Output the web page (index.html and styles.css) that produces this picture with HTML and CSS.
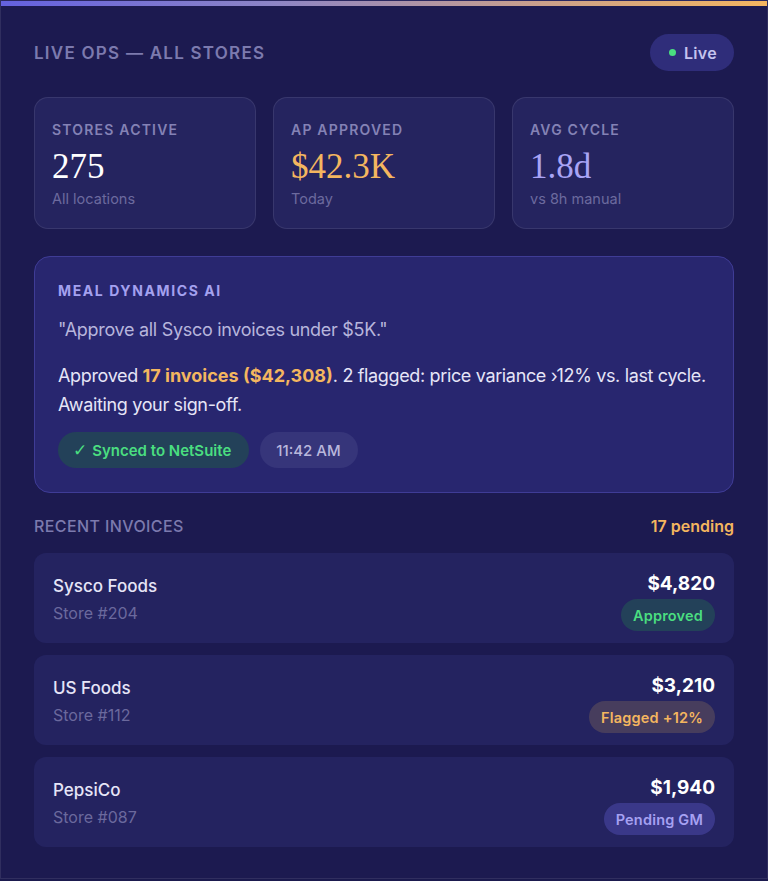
FILE: index.html
```html
<!DOCTYPE html>
<html lang="en">
<head>
<meta charset="utf-8">
<title>Live Ops — All Stores</title>
<link rel="stylesheet" href="styles.css">
</head>
<body>
<main class="panel">
  <div class="accent-bar"></div>
  <div class="panel-body">
    <header class="panel-head">
      <h1 class="panel-title">LIVE OPS — ALL STORES</h1>
      <span class="live-pill"><span class="live-dot"></span>Live</span>
    </header>

    <section class="stats">
      <div class="stat">
        <div class="stat-label">STORES ACTIVE</div>
        <div class="stat-value">275</div>
        <div class="stat-sub">All locations</div>
      </div>
      <div class="stat">
        <div class="stat-label">AP APPROVED</div>
        <div class="stat-value stat-value--amber">$42.3K</div>
        <div class="stat-sub">Today</div>
      </div>
      <div class="stat">
        <div class="stat-label">AVG CYCLE</div>
        <div class="stat-value stat-value--violet">1.8d</div>
        <div class="stat-sub">vs 8h manual</div>
      </div>
    </section>

    <section class="ai-card">
      <div class="ai-label">MEAL DYNAMICS AI</div>
      <p class="ai-quote">"Approve all Sysco invoices under $5K."</p>
      <p class="ai-reply">Approved <strong class="hl">17 invoices ($42,308)</strong>. 2 flagged: price variance ›12% vs. last cycle. Awaiting your sign-off.</p>
      <div class="ai-tags">
        <span class="tag tag--ok"><span class="tick">✓</span>Synced to NetSuite</span>
        <span class="tag tag--time">11:42 AM</span>
      </div>
    </section>

    <div class="list-head">
      <span class="list-title">RECENT INVOICES</span>
      <span class="list-count">17 pending</span>
    </div>

    <ul class="invoices">
      <li class="invoice">
        <div class="inv-left">
          <div class="inv-name">Sysco Foods</div>
          <div class="inv-store">Store #204</div>
        </div>
        <div class="inv-right">
          <div class="inv-amount">$4,820</div>
          <span class="badge badge--ok">Approved</span>
        </div>
      </li>
      <li class="invoice">
        <div class="inv-left">
          <div class="inv-name">US Foods</div>
          <div class="inv-store">Store #112</div>
        </div>
        <div class="inv-right">
          <div class="inv-amount">$3,210</div>
          <span class="badge badge--warn">Flagged +12%</span>
        </div>
      </li>
      <li class="invoice">
        <div class="inv-left">
          <div class="inv-name">PepsiCo</div>
          <div class="inv-store">Store #087</div>
        </div>
        <div class="inv-right">
          <div class="inv-amount">$1,940</div>
          <span class="badge badge--pending">Pending GM</span>
        </div>
      </li>
    </ul>
  </div>
</main>
</body>
</html>
```

FILE: styles.css
```css
* { box-sizing: border-box; }

html, body {
  margin: 0;
  padding: 0;
  background: #1b1a4e;
}

body {
  font-family: Inter, "Noto Sans", "Liberation Sans", sans-serif;
  color: #e4e3f5;
}

.panel {
  width: 768px;
  height: 879px;
  background: #1c1a50;
  border: 1px solid rgba(255, 255, 255, 0.09);
  border-top: 0;
  overflow: hidden;
}

.accent-bar {
  height: 6px;
  border-top: 1px solid #2a2860;
  background: linear-gradient(90deg, #6461e0 0%, #8c84c6 35%, #c9a08c 70%, #f4b660 100%);
}

.panel-body {
  padding: 28px 33px 0;
}

/* header */
.panel-head {
  display: flex;
  align-items: center;
  justify-content: space-between;
  height: 37px;
}

.panel-title {
  margin: 0;
  font-size: 17px;
  font-weight: 600;
  letter-spacing: 1.25px;
  color: #7c7aae;
}

.live-pill {
  display: inline-flex;
  align-items: center;
  gap: 8px;
  height: 37px;
  padding: 0 17px 0 19px;
  border-radius: 999px;
  background: #2f2d7a;
  color: #c5c3ee;
  font-size: 16px;
  font-weight: 600;
  letter-spacing: 0.3px;
}

.live-dot {
  width: 7px;
  height: 7px;
  border-radius: 50%;
  background: #4ade80;
}

/* stat cards */
.stats {
  display: grid;
  grid-template-columns: repeat(3, 1fr);
  gap: 17px;
  margin-top: 26px;
}

.stat {
  height: 132px;
  padding: 23px 17px 0;
  border-radius: 14px;
  background: #25245f;
  border: 1px solid rgba(255, 255, 255, 0.09);
}

.stat-label {
  font-size: 14px;
  font-weight: 600;
  letter-spacing: 1.2px;
  line-height: 18px;
  color: #8482b5;
}

.stat-value {
  margin-top: 8px;
  font-family: "Liberation Serif", "DejaVu Serif", serif;
  font-size: 35px;
  line-height: 40px;
  color: #ffffff;
}

.stat-value--amber { color: #f4b65f; }
.stat-value--violet { color: #a9a4f5; }

.stat-sub {
  margin-top: 2px;
  font-size: 14.5px;
  line-height: 20px;
  color: #6c6a9e;
}

/* assistant card */
.ai-card {
  margin-top: 27px;
  padding: 25px 23px 24px;
  border-radius: 16px;
  background: #28266f;
  border: 1px solid #3f3c96;
}

.ai-label {
  font-size: 14px;
  font-weight: 700;
  letter-spacing: 1.6px;
  line-height: 18px;
  color: #a4a1ef;
}

.ai-quote {
  margin: 16px 0 0;
  font-size: 18px;
  line-height: 28px;
  letter-spacing: -0.3px;
  color: #b7b5dc;
}

.ai-reply {
  margin: 17px 0 0;
  font-size: 18px;
  line-height: 29px;
  letter-spacing: -0.35px;
  color: #e6e5f7;
}

.hl {
  font-weight: 700;
  letter-spacing: 0;
  color: #f4b65f;
}

.ai-tags {
  display: flex;
  gap: 11px;
  margin-top: 13px;
}

.tag {
  display: inline-flex;
  align-items: center;
  height: 36px;
  padding: 0 18px;
  border-radius: 999px;
  font-size: 15px;
}

.tag--ok {
  padding: 0 18px 0 15px;
  background: #234159;
  color: #4ade80;
  font-weight: 600;
}

.tick {
  margin-right: 5px;
  font-family: "DejaVu Sans", sans-serif;
  font-size: 17px;
  font-weight: 400;
}

.tag--time {
  padding: 0 17px 0 16px;
  background: #36357a;
  color: #b9b7dc;
  font-weight: 500;
}

/* invoice list */
.list-head {
  display: flex;
  justify-content: space-between;
  align-items: center;
  margin-top: 23px;
  height: 20px;
}

.list-title {
  font-size: 16px;
  font-weight: 500;
  letter-spacing: 0.4px;
  color: #7c7aae;
}

.list-count {
  font-size: 16px;
  font-weight: 600;
  color: #f4b65f;
}

.invoices {
  list-style: none;
  margin: 17px 0 0;
  padding: 0;
  display: flex;
  flex-direction: column;
  gap: 12px;
}

.invoice {
  display: flex;
  justify-content: space-between;
  align-items: flex-start;
  height: 90px;
  padding: 19px 19px 0;
  border-radius: 12px;
  background: #242360;
}

.inv-name {
  margin-top: 2px;
  font-size: 17px;
  font-weight: 500;
  line-height: 24px;
  color: #e6e5f7;
}

.inv-store {
  margin-top: 4px;
  font-size: 16px;
  line-height: 22px;
  color: #6b699d;
}

.inv-right {
  display: flex;
  flex-direction: column;
  align-items: flex-end;
}

.inv-amount {
  font-size: 19px;
  font-weight: 700;
  line-height: 24px;
  color: #ffffff;
}

.badge {
  display: inline-flex;
  align-items: center;
  height: 32px;
  margin-top: 3px;
  padding: 0 12px;
  border-radius: 999px;
  font-size: 14.5px;
  font-weight: 600;
  letter-spacing: 0.2px;
}

.badge--ok {
  background: #234159;
  color: #4ade80;
}

.badge--warn {
  background: #473d5d;
  color: #f4b65f;
}

.badge--pending {
  background: #3a3889;
  color: #a6a1f2;
}
```
